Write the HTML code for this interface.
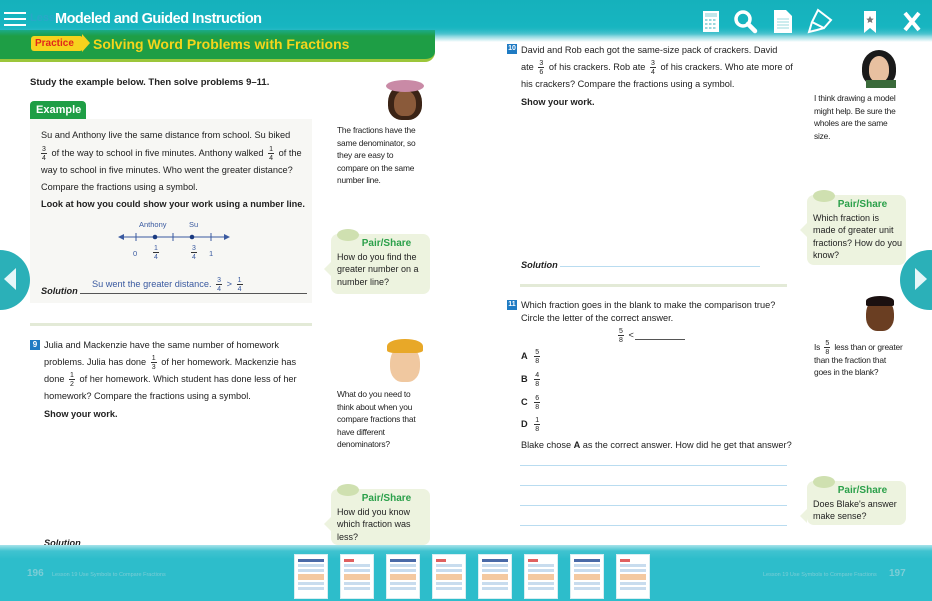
<!DOCTYPE html>
<html><head><meta charset="utf-8"><style>
*{margin:0;padding:0;box-sizing:border-box}
body{width:932px;height:601px;overflow:hidden;background:#fff;font-family:"Liberation Sans",sans-serif;color:#222;position:relative;font-size:9.2px}
.a{position:absolute;white-space:nowrap;line-height:12px}
.f{display:inline-block;position:relative;width:6px;height:8px;vertical-align:baseline;margin:0 2px;font-size:7px}
.f span{position:absolute;left:0;width:100%;text-align:center;line-height:7px}
.f span:first-child{top:-2px;border-bottom:0.6px solid #333;height:7.5px}
.f span:last-child{top:6.5px}
.b{font-weight:bold}
.note{position:absolute;font-size:8.4px;line-height:12.5px;color:#222;letter-spacing:-0.2px;white-space:nowrap}
.ps{position:absolute;background:#edf3df;border-radius:7px;font-size:9px;line-height:12.5px;padding:4px 6px;color:#222;white-space:nowrap}
.ps .h{color:#2ba04a;font-weight:bold;font-size:10px;text-align:center;padding-left:12px}
.bub{position:absolute;left:6px;top:-5px;width:22px;height:12px;border-radius:50%;background:#cfe0b0}
.tri{position:absolute;left:-7px;top:28px;width:0;height:0;border-top:7px solid transparent;border-bottom:7px solid transparent;border-right:7px solid #edf3df}
.line{position:absolute;height:1px;background:#b9dcf0}
.av{position:absolute;border-radius:50% 50% 40% 40%}
.th{position:absolute;top:554px;width:34px;height:45px;background:#fff;border:1px solid #d8eef2;padding:2px}
.th div{height:3px;margin:2px 1px;background:#c8dcee}
</style></head><body>

<div class="a" style="left:0;top:0;width:932px;height:42px;background:linear-gradient(#15b1bc 0,#17b5c0 26px,#5cc8d3 34px,rgba(255,255,255,0) 42px)"></div>
<div class="a" style="left:0;top:30px;width:435px;height:32px;background:#1e9e45;border-radius:0 0 10px 0;border-bottom:3px solid #9cc63a"></div>
<div class="a" style="left:0;top:26px;width:932px;height:10px;background:linear-gradient(rgba(23,181,192,0.9),rgba(23,181,192,0))"></div>
<div class="a" style="left:31px;top:36px;width:52px;height:15px;background:#f7d21d;border-radius:3px;color:#e1251b;font-weight:bold;font-size:10px;line-height:15px;padding-left:4px">Practice</div>
<div class="a" style="left:82px;top:34px;width:0;height:0;border-top:9px solid transparent;border-bottom:9px solid transparent;border-left:8px solid #f7d21d"></div>
<div class="a" style="left:93px;top:36px;color:#f5d51c;font-weight:bold;font-size:14px;line-height:16px">Solving Word Problems with Fractions</div>
<div class="a" style="left:4px;top:12px;width:22px;height:2px;background:#fff;box-shadow:0 6px 0 #fff,0 12px 0 #fff"></div>
<div class="a" style="left:30px;top:12px;color:#3a9ed0;font-weight:bold;font-size:11px;opacity:.5">Lesso</div>
<div class="a" style="left:55px;top:10px;color:#fff;font-weight:bold;font-size:14.5px;line-height:18px;letter-spacing:-0.5px">Modeled and Guided Instruction</div>
<svg class="a" style="left:700px;top:8px" width="225" height="26" viewBox="0 0 225 26">
<rect x="3" y="3" width="16" height="21" fill="#fff"/><rect x="5" y="5" width="12" height="4" fill="#bfe6ea"/>
<g fill="#9bd8de"><rect x="5" y="11" width="2.5" height="2"/><rect x="9" y="11" width="2.5" height="2"/><rect x="13" y="11" width="2.5" height="2"/><rect x="5" y="15" width="2.5" height="2"/><rect x="9" y="15" width="2.5" height="2"/><rect x="13" y="15" width="2.5" height="2"/><rect x="5" y="19" width="2.5" height="2"/><rect x="9" y="19" width="2.5" height="2"/><rect x="13" y="19" width="2.5" height="2"/></g>
<circle cx="43" cy="11" r="7" fill="none" stroke="#fff" stroke-width="3.5"/><path d="M48 16 L55 23" stroke="#fff" stroke-width="4.5" stroke-linecap="round"/>
<path d="M74 2 H86 L92 8 V25 H74 Z" fill="#fff"/><g stroke="#9bd8de" stroke-width="1"><path d="M77 11H89M77 14H89M77 17H89M77 20H89"/></g>
<path d="M118 2 L131 12 L124 20 L112 14 Z M112 14 L109 24 L117 22 L124 20" fill="none" stroke="#fff" stroke-width="2"/>
<path d="M164 3 H176 V25 L170 20 L164 25 Z" fill="#fff"/><path d="M170 8 l1.2 2.5 2.5.3-1.9 1.7.6 2.5-2.4-1.3-2.4 1.3.6-2.5-1.9-1.7 2.5-.3z" fill="#777"/>
<path d="M205 5 L219 22 M219 5 L205 22" stroke="#fff" stroke-width="4"/>
</svg>

<div class="a b" style="left:30px;top:77px;font-size:9.5px">Study the example below. Then solve problems 9–11.</div>
<div class="a" style="left:30px;top:101px;width:56px;height:19px;background:#1e9e45;border-radius:4px 4px 0 0;color:#fff;font-weight:bold;font-size:11px;line-height:18px;padding-left:6px">Example</div>
<div class="a" style="left:30px;top:119px;width:282px;height:184px;background:#f7f7f4"></div>
<div class="a" style="left:41px;top:129px">Su and Anthony live the same distance from school. Su biked</div>
<div class="a" style="left:41px;top:147px"><span class="f" style="margin-left:0"><span>3</span><span>4</span></span> of the way to school in five minutes. Anthony walked <span class="f"><span>1</span><span>4</span></span> of the</div>
<div class="a" style="left:41px;top:164px">way to school in five minutes. Who went the greater distance?</div>
<div class="a" style="left:41px;top:181px">Compare the fractions using a symbol.</div>
<div class="a b" style="left:41px;top:198px">Look at how you could show your work using a number line.</div>
<div class="a" style="left:139px;top:219px;font-size:7.5px;color:#3a5aa0">Anthony</div>
<div class="a" style="left:189px;top:219px;font-size:7.5px;color:#3a5aa0">Su</div>
<svg class="a" style="left:118px;top:231px" width="112" height="12"><path d="M4 6H108" stroke="#3a5aa0" stroke-width="1"/><path d="M0 6 L6 3 L6 9Z M112 6 L106 3 L106 9Z" fill="#3a5aa0"/><g stroke="#3a5aa0"><path d="M18 2V10M55 2V10M93 2V10"/></g><circle cx="37" cy="6" r="2.3" fill="#1a3a80"/><circle cx="74" cy="6" r="2.3" fill="#1a3a80"/></svg>
<div class="a" style="left:133px;top:248px;font-size:7.5px;color:#3a5aa0">0</div>
<div class="a" style="left:151px;top:246px;color:#3a5aa0"><span class="f"><span>1</span><span>4</span></span></div>
<div class="a" style="left:189px;top:246px;color:#3a5aa0"><span class="f"><span>3</span><span>4</span></span></div>
<div class="a" style="left:209px;top:248px;font-size:7.5px;color:#3a5aa0">1</div>
<div class="a b" style="left:41px;top:285px;font-style:italic">Solution</div>
<div class="line" style="left:80px;top:293px;width:227px;background:#555"></div>
<div class="a" style="left:92px;top:278px;color:#3a5aa0">Su went the greater distance. <span class="f"><span>3</span><span>4</span></span> &gt; <span class="f"><span>1</span><span>4</span></span></div>
<div class="note" style="left:337px;top:124px">The fractions have the<br>same denominator, so<br>they are easy to<br>compare on the same<br>number line.</div>
<div class="ps" style="left:331px;top:234px;width:99px;height:60px"><div class="bub"></div><div class="tri"></div><div class="h">Pair/Share</div>How do you find the<br>greater number on a<br>number line?</div>
<div class="av" style="left:388px;top:84px;width:34px;height:36px;background:#3b2416"></div>
<div class="av" style="left:394px;top:90px;width:22px;height:26px;background:#8a5a3a"></div>
<div class="av" style="left:386px;top:80px;width:38px;height:12px;background:#c98aa6;border-radius:50%"></div>

<div class="line" style="left:30px;top:323px;width:282px;height:3px;background:#e3ead7"></div>
<div class="a" style="left:30px;top:340px;width:10px;height:10px;background:#1f7bc3;color:#fff;font-size:8px;font-weight:bold;text-align:center;line-height:10px">9</div>
<div class="a" style="left:44px;top:339px">Julia and Mackenzie have the same number of homework</div>
<div class="a" style="left:44px;top:356px">problems. Julia has done <span class="f"><span>1</span><span>3</span></span> of her homework. Mackenzie has</div>
<div class="a" style="left:44px;top:373px">done <span class="f"><span>1</span><span>2</span></span> of her homework. Which student has done less of her</div>
<div class="a" style="left:44px;top:390px">homework? Compare the fractions using a symbol.</div>
<div class="a b" style="left:44px;top:408px">Show your work.</div>
<div class="a b" style="left:44px;top:537px;font-style:italic">Solution</div>
<div class="av" style="left:390px;top:344px;width:30px;height:38px;background:#f0c8a0"></div>
<div class="av" style="left:387px;top:339px;width:36px;height:14px;background:#e8a828;border-radius:50% 50% 20% 20%"></div>
<div class="note" style="left:337px;top:388px">What do you need to<br>think about when you<br>compare fractions that<br>have different<br>denominators?</div>
<div class="ps" style="left:331px;top:489px;width:99px;height:56px"><div class="bub"></div><div class="tri"></div><div class="h">Pair/Share</div>How did you know<br>which fraction was<br>less?</div>

<div class="a" style="left:507px;top:44px;width:10px;height:10px;background:#1f7bc3;color:#fff;font-size:7px;font-weight:bold;text-align:center;line-height:10px">10</div>
<div class="a" style="left:521px;top:44px">David and Rob each got the same-size pack of crackers. David</div>
<div class="a" style="left:521px;top:61px">ate <span class="f"><span>3</span><span>6</span></span> of his crackers. Rob ate <span class="f"><span>3</span><span>4</span></span> of his crackers. Who ate more of</div>
<div class="a" style="left:521px;top:78px">his crackers? Compare the fractions using a symbol.</div>
<div class="a b" style="left:521px;top:96px">Show your work.</div>
<div class="a b" style="left:521px;top:259px;font-style:italic">Solution</div>
<div class="line" style="left:560px;top:266px;width:200px"></div>
<div class="line" style="left:520px;top:284px;width:267px;height:3px;background:#e3ead7"></div>
<div class="a" style="left:507px;top:300px;width:10px;height:10px;background:#1f7bc3;color:#fff;font-size:7px;font-weight:bold;text-align:center;line-height:10px">11</div>
<div class="a" style="left:521px;top:299px">Which fraction goes in the blank to make the comparison true?</div>
<div class="a" style="left:521px;top:312px">Circle the letter of the correct answer.</div>
<div class="a" style="left:616px;top:329px"><span class="f"><span>5</span><span>8</span></span> &lt; </div>
<div class="line" style="left:635px;top:339px;width:50px;background:#555"></div>
<div class="a" style="left:521px;top:350px"><b>A</b> <span class="f" style="margin-left:4px"><span>5</span><span>8</span></span></div>
<div class="a" style="left:521px;top:373px"><b>B</b> <span class="f" style="margin-left:4px"><span>4</span><span>8</span></span></div>
<div class="a" style="left:521px;top:396px"><b>C</b> <span class="f" style="margin-left:4px"><span>6</span><span>8</span></span></div>
<div class="a" style="left:521px;top:418px"><b>D</b> <span class="f" style="margin-left:4px"><span>1</span><span>8</span></span></div>
<div class="a" style="left:521px;top:439px">Blake chose <b>A</b> as the correct answer. How did he get that answer?</div>
<div class="line" style="left:520px;top:465px;width:267px"></div>
<div class="line" style="left:520px;top:485px;width:267px"></div>
<div class="line" style="left:520px;top:505px;width:267px"></div>
<div class="line" style="left:520px;top:525px;width:267px"></div>
<div class="av" style="left:862px;top:50px;width:34px;height:36px;background:#1a1a1a"></div>
<div class="av" style="left:869px;top:56px;width:20px;height:26px;background:#e8c0a0"></div>
<div class="a" style="left:866px;top:80px;width:30px;height:8px;background:#3a6a3a"></div>
<div class="note" style="left:814px;top:92px">I think drawing a model<br>might help. Be sure the<br>wholes are the same<br>size.</div>
<div class="ps" style="left:807px;top:195px;width:99px;height:70px"><div class="bub"></div><div class="tri"></div><div class="h">Pair/Share</div>Which fraction is<br>made of greater unit<br>fractions? How do you<br>know?</div>
<div class="av" style="left:866px;top:297px;width:28px;height:34px;background:#6a3e22"></div>
<div class="av" style="left:866px;top:296px;width:28px;height:10px;background:#1a1010;border-radius:50% 50% 10% 10%"></div>
<div class="note" style="left:814px;top:341px">Is <span class="f"><span>5</span><span>8</span></span> less than or greater<br>than the fraction that<br>goes in the blank?</div>
<div class="ps" style="left:807px;top:481px;width:99px;height:44px"><div class="bub"></div><div class="tri"></div><div class="h">Pair/Share</div>Does Blake's answer<br>make sense?</div>

<div class="a" style="left:-30px;top:250px;width:60px;height:60px;border-radius:50%;background:#2bb0b8"></div>
<div class="a" style="left:4px;top:268px;width:0;height:0;border-top:11px solid transparent;border-bottom:11px solid transparent;border-right:12px solid #e6f6f8"></div>
<div class="a" style="left:900px;top:250px;width:60px;height:60px;border-radius:50%;background:#2bb0b8"></div>
<div class="a" style="left:915px;top:268px;width:0;height:0;border-top:11px solid transparent;border-bottom:11px solid transparent;border-left:12px solid #e6f6f8"></div>

<div class="a" style="left:0;top:545px;width:932px;height:56px;background:linear-gradient(#a8e3ea 0,#40c3d0 6px,#2dbdcb 14px,#2dbdcb)"></div>
<div class="a" style="left:27px;top:568px;color:#7ccdd6;font-size:10px;font-weight:bold">196</div>
<div class="a" style="left:52px;top:569px;color:#7ccdd6;font-size:5.5px">Lesson 19 Use Symbols to Compare Fractions</div>
<div class="a" style="left:763px;top:569px;color:#7ccdd6;font-size:5.5px">Lesson 19 Use Symbols to Compare Fractions</div>
<div class="a" style="left:889px;top:568px;color:#7ccdd6;font-size:10px;font-weight:bold">197</div>
<div class="th" style="left:294px"><div style="background:#4a6aa8"></div><div></div><div></div><div style="background:#f4c9a0;height:6px"></div><div></div><div></div></div>
<div class="th" style="left:340px"><div style="background:#e06060;width:10px"></div><div></div><div></div><div style="background:#f4c9a0;height:6px"></div><div></div><div></div></div>
<div class="th" style="left:386px"><div style="background:#4a6aa8"></div><div></div><div></div><div style="background:#f4c9a0;height:6px"></div><div></div><div></div></div>
<div class="th" style="left:432px"><div style="background:#e06060;width:10px"></div><div></div><div></div><div style="background:#f4c9a0;height:6px"></div><div></div><div></div></div>
<div class="th" style="left:478px"><div style="background:#4a6aa8"></div><div></div><div></div><div style="background:#f4c9a0;height:6px"></div><div></div><div></div></div>
<div class="th" style="left:524px"><div style="background:#e06060;width:10px"></div><div></div><div></div><div style="background:#f4c9a0;height:6px"></div><div></div><div></div></div>
<div class="th" style="left:570px"><div style="background:#4a6aa8"></div><div></div><div></div><div style="background:#f4c9a0;height:6px"></div><div></div><div></div></div>
<div class="th" style="left:616px"><div style="background:#e06060;width:10px"></div><div></div><div></div><div style="background:#f4c9a0;height:6px"></div><div></div><div></div></div>
</body></html>
